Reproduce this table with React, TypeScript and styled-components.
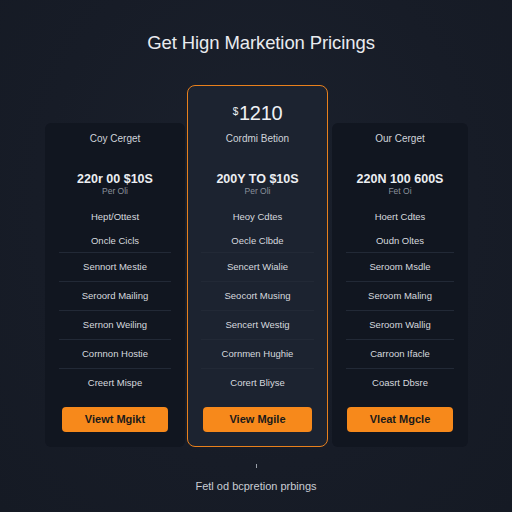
import React from "react";
import styled, { createGlobalStyle } from "styled-components";

const Global = createGlobalStyle`
  html, body { margin: 0; padding: 0; background: #171c27; }
  body { font-family: "Liberation Sans", Arial, sans-serif; }
`;

const Page = styled.div`
  width: 512px;
  height: 512px;
  background: radial-gradient(ellipse at 50% 40%, #1b212d 0%, #171c27 60%, #151a24 100%);
  display: flex;
  flex-direction: column;
  align-items: center;
  overflow: hidden;
`;

const Title = styled.h1`
  margin: 31px 0 0 10px;
  font-size: 18.5px;
  line-height: 24px;
  font-weight: 400;
  color: #e9ebef;
  letter-spacing: -0.1px;
`;

const Row = styled.div`
  margin-top: 30px;
  display: flex;
  align-items: flex-start;
  padding-left: 45px;
  align-self: stretch;
`;

const Card = styled.div<{ $w: number; $featured?: boolean; $gap: number }>`
  box-sizing: border-box;
  width: ${(p) => p.$w}px;
  margin-right: ${(p) => p.$gap}px;
  margin-top: ${(p) => (p.$featured ? 0 : 38)}px;
  border-radius: ${(p) => (p.$featured ? 8 : 6)}px;
  border: 1.5px solid ${(p) => (p.$featured ? "#e8801c" : "transparent")};
  background: ${(p) => (p.$featured ? "#1c2330" : "#111620")};
  display: flex;
  flex-direction: column;
  align-items: center;
  padding: ${(p) => (p.$featured ? "13.5px" : "6.5px")} 0 14px;
`;

const BigPrice = styled.div`
  font-size: 20px;
  line-height: 26px;
  color: #eef0f3;
  margin-bottom: 5px;
  letter-spacing: -0.3px;
  sup {
    font-size: 10px;
    vertical-align: top;
    position: relative;
    top: -1px;
    margin-right: 1px;
  }
`;

const PlanName = styled.div`
  font-size: 10px;
  line-height: 16px;
  color: #cfd3da;
`;

const Price = styled.div`
  margin-top: 25px;
  font-size: 12.5px;
  line-height: 14px;
  font-weight: 600;
  color: #eceef2;
`;

const Per = styled.div`
  font-size: 8.5px;
  line-height: 10px;
  color: #8b919c;
`;

const Features = styled.ul`
  list-style: none;
  margin: 8px 0 0;
  padding: 0 13px;
  align-self: stretch;
`;

const Feature = styled.li<{ $divided?: boolean }>`
  height: ${(p) => (p.$divided ? 29 : 24)}px;
  display: flex;
  align-items: center;
  justify-content: center;
  box-sizing: border-box;
  border-top: 1px solid ${(p) => (p.$divided ? "#222936" : "transparent")};
  font-size: 9.5px;
  color: #d6d9df;
`;

const Button = styled.button<{ $inset: number }>`
  margin-top: 10px;
  align-self: stretch;
  margin-left: ${(p) => p.$inset}px;
  margin-right: ${(p) => p.$inset}px;
  height: 25px;
  border: none;
  border-radius: 4px;
  background: #f7891b;
  color: #1a1a1a;
  font-family: "Liberation Sans", Arial, sans-serif;
  font-size: 11px;
  font-weight: 600;
  cursor: pointer;
`;

const Tick = styled.div`
  margin-top: 17px;
  width: 1px;
  height: 4px;
  background: #9aa0aa;
`;

const Footer = styled.p`
  margin: 11px 0 0;
  font-size: 11px;
  line-height: 14px;
  color: #c9cdd4;
`;

type Plan = {
  w: number;
  gap: number;
  inset: number;
  featured?: boolean;
  big?: string;
  name: string;
  price: string;
  per: string;
  features: string[];
  cta: string;
};

const plans: Plan[] = [
  {
    w: 140,
    gap: 2,
    inset: 16,
    name: "Coy Cerget",
    price: "220r 00 $10S",
    per: "Per Oli",
    features: ["Hept/Ottest", "Oncle Cicls", "Sennort Mestie", "Seroord Mailing", "Sernon Weiling", "Cornnon Hostie", "Creert Mispe"],
    cta: "Viewt Mgikt",
  },
  {
    w: 141,
    gap: 4,
    inset: 15,
    featured: true,
    big: "1210",
    name: "Cordmi Betion",
    price: "200Y TO $10S",
    per: "Per Oli",
    features: ["Heoy Cdtes", "Oecle Clbde", "Sencert Wialie", "Seocort Musing", "Sencert Westig", "Cornmen Hughie", "Corert Bliyse"],
    cta: "View Mgile",
  },
  {
    w: 136,
    gap: 0,
    inset: 14,
    name: "Our Cerget",
    price: "220N 100 600S",
    per: "Fet Oi",
    features: ["Hoert Cdtes", "Oudn Oltes", "Seroom Msdle", "Seroom Maling", "Seroom Wallig", "Carroon Ifacle", "Coasrt Dbsre"],
    cta: "Vleat Mgcle",
  },
];

export default function App() {
  return (
    <>
      <Global />
      <Page>
        <Title>Get Hign Marketion Pricings</Title>
        <Row>
          {plans.map((p) => (
            <Card key={p.name} $w={p.w} $gap={p.gap} $featured={p.featured}>
              {p.big && (
                <BigPrice>
                  <sup>$</sup>
                  {p.big}
                </BigPrice>
              )}
              <PlanName>{p.name}</PlanName>
              <Price>{p.price}</Price>
              <Per>{p.per}</Per>
              <Features>
                {p.features.map((f, i) => (
                  <Feature key={f} $divided={i >= 2}>
                    {f}
                  </Feature>
                ))}
              </Features>
              <Button $inset={p.inset}>{p.cta}</Button>
            </Card>
          ))}
        </Row>
        <Tick />
        <Footer>Fetl od bcpretion prbings</Footer>
      </Page>
    </>
  );
}
